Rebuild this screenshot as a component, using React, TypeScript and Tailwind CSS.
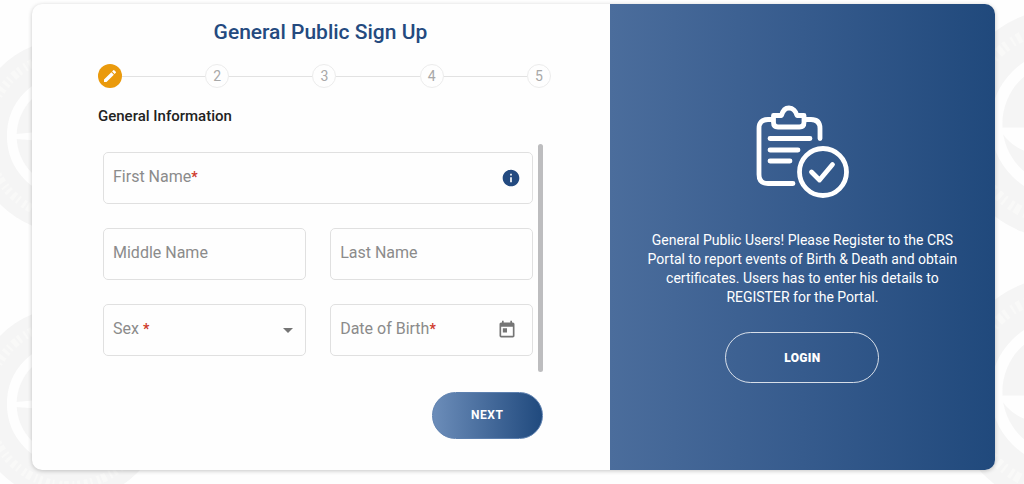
import { useState, type ReactNode } from "react"
import { MdEdit, MdInfo, MdToday, MdArrowDropDown } from "react-icons/md"

const steps = [1, 2, 3, 4, 5]

export default function App() {
  return (
    <div className="relative min-h-screen overflow-hidden bg-[#fefefe] px-8 pt-1 pb-3 font-[Roboto,sans-serif]">
      <Watermarks />
      <main className="relative mr-[-3px] flex min-h-[466px] overflow-hidden rounded-[10px] bg-[#fefefe] shadow-[0_1px_4px_rgba(0,0,0,0.22)]">
        <SignUpForm />
        <LoginPanel />
      </main>
    </div>
  )
}

function SignUpForm() {
  const [sex, setSex] = useState("")

  return (
    <section className="w-3/5 pt-3 pr-[59px] pl-[66px]">
      <h1 className="pr-2 text-center text-[21px] leading-8 font-medium text-[#244a7f]">
        General Public Sign Up
      </h1>
      <Stepper />
      <h2 className="mt-4 text-[15px] leading-6 font-medium text-[#222]">General Information</h2>

      <form onSubmit={(e) => e.preventDefault()}>
        <div className="mt-4 mr-2 flex justify-between">
          <div className="grid grow grid-cols-2 gap-x-6 gap-y-6 pt-2 pb-4 pl-[5px]">
            <Field id="first-name" label="First Name" required className="col-span-2">
              <input id="first-name" type="text" className={inputClass} />
              <MdInfo className="pointer-events-none absolute top-4 right-3 size-5 text-[#234a80]" />
            </Field>
            <Field id="middle-name" label="Middle Name">
              <input id="middle-name" type="text" className={inputClass} />
            </Field>
            <Field id="last-name" label="Last Name">
              <input id="last-name" type="text" className={inputClass} />
            </Field>
            <Field id="sex" label="Sex " required>
              <select
                id="sex"
                value={sex}
                onChange={(e) => setSex(e.target.value)}
                className={inputClass}
              >
                <option value="" />
                <option value="m">Male</option>
                <option value="f">Female</option>
              </select>
              <MdArrowDropDown className="pointer-events-none absolute top-[14px] right-[6px] size-6 text-[#757575]" />
            </Field>
            <Field id="dob" label="Date of Birth" required>
              <input id="dob" type="text" className={inputClass} />
              <MdToday className="pointer-events-none absolute top-4 right-4 size-5 text-[#757575]" />
            </Field>
          </div>
          <div className="ml-[5px] w-[5px] rounded-full bg-[#bdbdbf]" />
        </div>
        <div className="mt-5 mr-2 flex justify-end">
          <button
            type="submit"
            className="h-[47px] w-[111px] rounded-full border border-[#5d80af] bg-linear-to-r from-[#6c8db9] to-[#204a7e] pb-[2px] text-xs font-bold tracking-wider text-white"
          >
            NEXT
          </button>
        </div>
      </form>
    </section>
  )
}

function Stepper() {
  return (
    <ol className="mt-4 flex items-center">
      {steps.map((step) => (
        <li key={step} className={step === 1 ? "flex items-center" : "flex grow items-center"}>
          {step > 1 && <span className="h-px grow bg-[#e2e2e2]" />}
          {step === 1 ? (
            <span className="flex size-6 items-center justify-center rounded-full bg-[#ea9a0c] text-white">
              <MdEdit className="size-4" />
            </span>
          ) : (
            <span className="flex size-6 items-center justify-center rounded-full border border-[#ececec] text-sm text-[#a8a8a8]">
              {step}
            </span>
          )}
        </li>
      ))}
    </ol>
  )
}

function LoginPanel() {
  return (
    <aside className="flex w-2/5 flex-col items-center bg-linear-to-r from-[#4b6d9c] via-[#365b8d] to-[#20497c] px-9 pt-[100px] text-white">
      <ClipboardIcon />
      <p className="mt-[33px] text-center text-sm leading-[19px]">
        General Public Users! Please Register to the CRS Portal to report events of Birth &amp;
        Death and obtain certificates. Users has to enter his details to REGISTER for the Portal.
      </p>
      <button
        type="button"
        className="mt-[25px] h-[51px] w-[154px] rounded-full border border-white/80 text-xs font-black tracking-wide text-white"
      >
        LOGIN
      </button>
    </aside>
  )
}

const inputClass =
  "block h-[52px] w-full appearance-none rounded-[5px] border border-[#e0e0e0] bg-transparent px-[10px] text-base text-[#333] outline-none focus:border-[#244a7f]"

/** Outlined control with its label resting inside the box. */
function Field({
  id,
  label,
  required,
  className = "",
  children,
}: {
  id: string
  label: string
  required?: boolean
  className?: string
  children: ReactNode
}) {
  return (
    <div className={`relative ${className}`}>
      {children}
      <label
        htmlFor={id}
        className="pointer-events-none absolute top-[13px] left-[10px] text-base leading-6 whitespace-pre text-[#8b8b8b]"
      >
        {label}
        {required && <span className="text-sm font-bold text-[#cf3a2c]">*</span>}
      </label>
    </div>
  )
}

function ClipboardIcon() {
  return (
    <svg
      viewBox="0 0 94 94"
      className="size-[94px]"
      fill="none"
      stroke="currentColor"
      strokeWidth="4.8"
      strokeLinecap="round"
      strokeLinejoin="round"
      aria-hidden="true"
    >
      <path d="M17 15.500h-4q-9 0-9 9v46q0 9 9 9h25M50 15.500h6q9 0 9 9V34.500" />
      <path d="M18.500 11.500h8c1-4 3.500-7.500 7.500-7.500s7 3.500 8 7.500h7v7q0 4.500-4.500 4.500h-21.500q-4.500 0-4.500-4.500z" />
      <path d="M15 34.500h40M15 46h28M15 57h20" />
      <circle cx="68" cy="68" r="23.500" />
      <path d="m56.500 68 8 8 13-15.500" />
    </svg>
  )
}

/** Faded seals repeated behind the card. */
function Watermarks() {
  return (
    <div className="pointer-events-none absolute inset-0" aria-hidden="true">
      <Seal className="absolute top-[39px] left-[-28px] size-[194px]">
        <path d="M45 98 100 93v14l-55-4z" fill="#fefefe" />
      </Seal>
      <Seal className="absolute top-[307px] left-[-28px] size-[194px]">
        <path d="M45 98 100 93v14l-55-4z" fill="#fefefe" />
      </Seal>
      <Seal className="absolute top-[8px] right-[-157px] size-[232px]">
        <path d="M43 103h114q-12 25-57 28-45-3-57-28z" fill="#fefefe" />
      </Seal>
      <Seal className="absolute top-[276px] right-[-157px] size-[232px]">
        <path d="M43 103h114q-12 25-57 28-45-3-57-28z" fill="#fefefe" />
      </Seal>
    </div>
  )
}

function Seal({ className, children }: { className: string; children: ReactNode }) {
  return (
    <svg viewBox="0 0 200 200" className={className} fill="none">
      <circle cx="100" cy="100" r="82" stroke="#f5f5f5" strokeWidth="36" />
      <circle
        cx="100"
        cy="100"
        r="84"
        stroke="#f9f9f8"
        strokeWidth="9"
        strokeDasharray="3 3 2 4 5 2 3 5 2 3 4 4"
      />
      <circle cx="100" cy="100" r="54" fill="#f5f5f5" />
      {children}
    </svg>
  )
}
